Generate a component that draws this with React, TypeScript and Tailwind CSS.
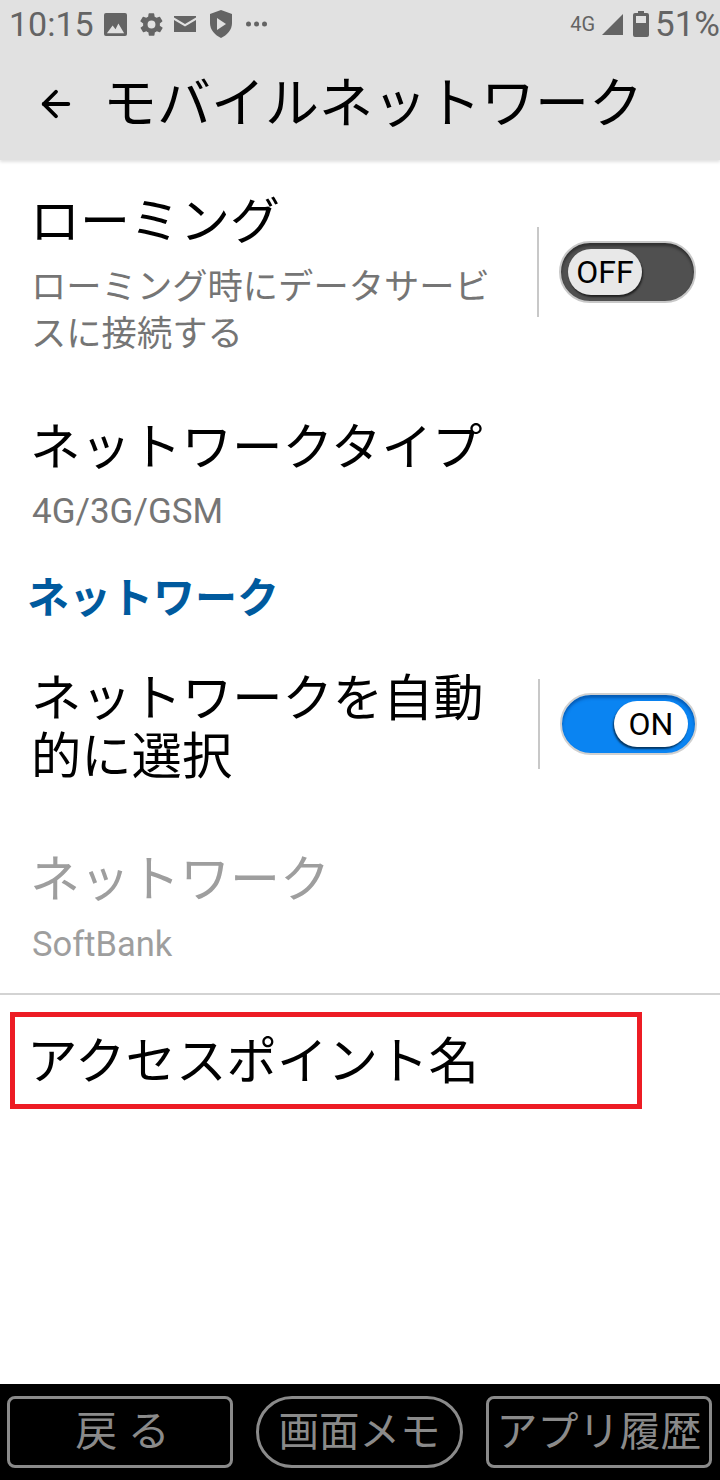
import React from 'react';
import { ArrowLeft } from 'lucide-react';

const jp = "font-['Roboto','Noto_Sans_CJK_JP',sans-serif]";

function Toggle({ on }: { on: boolean }) {
  if (on) {
    return (
      <div className="flex h-[62px] w-[137px] items-center justify-end rounded-full border-2 border-[#d0d0d0] bg-[#0a84f2] pr-[7px] shadow-[inset_0_3px_3px_rgba(0,50,120,0.5)]">
        <div className="flex h-[46px] w-[74px] items-center justify-center rounded-full bg-white text-[32px] leading-none text-black shadow-[-1px_2px_2px_rgba(0,0,0,0.6)]">
          ON
        </div>
      </div>
    );
  }
  return (
    <div className="flex h-[62px] w-[137px] items-center justify-start rounded-full border-2 border-[#c8c8c8] bg-[#505050] pl-[7px] shadow-[inset_0_3px_3px_rgba(0,0,0,0.4)]">
      <div className="flex h-[46px] w-[74px] items-center justify-center rounded-full bg-[#e8e8e8] text-[32px] leading-none text-black shadow-[1px_2px_2px_rgba(0,0,0,0.6)]">
        OFF
      </div>
    </div>
  );
}

function StatusBar() {
  return (
    <div className="flex h-[48px] items-center justify-between pl-[9px] text-[#646464]">
      <div className="flex items-center">
        <span className="text-[34px] leading-none">10:15</span>
        {/* notification icons */}
        <svg className="ml-[10px]" width="23" height="23" viewBox="0 0 24 24" fill="#646464">
          <path d="M2 0h20a2 2 0 0 1 2 2v20a2 2 0 0 1-2 2H2a2 2 0 0 1-2-2V2a2 2 0 0 1 2-2z" />
          <path d="M3 21l6-8 3 4 3-6 6 10z" fill="#e1e1e1" />
        </svg>
        <svg className="ml-[11px]" width="27" height="27" viewBox="0 0 24 24" fill="#646464">
          <path d="M19.4 13a7.5 7.5 0 0 0 0-2l2.1-1.6a.5.5 0 0 0 .1-.7l-2-3.4a.5.5 0 0 0-.6-.2l-2.5 1a7.3 7.3 0 0 0-1.7-1l-.4-2.7a.5.5 0 0 0-.5-.4h-4a.5.5 0 0 0-.5.4l-.4 2.7a7.3 7.3 0 0 0-1.7 1l-2.5-1a.5.5 0 0 0-.6.2l-2 3.4a.5.5 0 0 0 .1.7L4.6 11a7.5 7.5 0 0 0 0 2l-2.1 1.6a.5.5 0 0 0-.1.7l2 3.4a.5.5 0 0 0 .6.2l2.5-1a7.3 7.3 0 0 0 1.7 1l.4 2.7a.5.5 0 0 0 .5.4h4a.5.5 0 0 0 .5-.4l.4-2.7a7.3 7.3 0 0 0 1.7-1l2.5 1a.5.5 0 0 0 .6-.2l2-3.4a.5.5 0 0 0-.1-.7zM12 15.5a3.5 3.5 0 1 1 0-7 3.5 3.5 0 0 1 0 7z" />
        </svg>
        <svg className="ml-[9px]" width="22" height="16" viewBox="0 0 22 16" fill="#646464">
          <path d="M0 0h22v1.5L11 8 0 1.5z" />
          <path d="M0 4l11 6.5L22 4v12H0z" />
        </svg>
        <svg className="ml-[13px]" width="24" height="28" viewBox="0 0 24 28" fill="#646464">
          <path d="M12 0l11 4v9c0 7-5 12-11 15C6 25 1 20 1 13V4z" />
          <path d="M8 8l9 6-9 6z" fill="#e1e1e1" />
        </svg>
        <svg className="ml-[13px]" width="21" height="6" viewBox="0 0 21 6" fill="#646464">
          <circle cx="2.5" cy="3" r="2.5" />
          <circle cx="10.5" cy="3" r="2.5" />
          <circle cx="18.5" cy="3" r="2.5" />
        </svg>
      </div>
      <div className="flex items-center">
        <span className="text-[20px] leading-none">4G</span>
        <svg className="ml-[7px]" width="21" height="21" viewBox="0 0 21 21" fill="#646464">
          <path d="M21 0v21H0z" />
        </svg>
        <svg className="ml-[10px]" width="16" height="26" viewBox="0 0 16 26" fill="#646464">
          <path d="M5 0h6v2h3a2 2 0 0 1 2 2v20a2 2 0 0 1-2 2H2a2 2 0 0 1-2-2V4a2 2 0 0 1 2-2h3z" />
          <path d="M3 5h10v7H3z" fill="#e1e1e1" />
        </svg>
        <span className="ml-[6px] text-[35px] leading-none">51%</span>
      </div>
    </div>
  );
}

function NavButton({ label, className }: { label: string; className: string }) {
  return (
    <div className={`flex h-[72px] items-center justify-center whitespace-nowrap border-[3px] border-[#8a8a8a] text-[#8a8a8a] ${className}`}>
      {label}
    </div>
  );
}

export default function App() {
  return (
    <div className={`flex h-[1480px] w-[720px] flex-col overflow-hidden bg-white text-black ${jp}`}>
      <header className="h-[160px] bg-[#e1e1e1] shadow-[0_2px_3px_rgba(0,0,0,0.12)]">
        <StatusBar />
        <div className="flex h-[112px] items-center pl-[35px]">
          <ArrowLeft size={42} strokeWidth={2.2} />
          <span className="ml-[26px] mt-[1px] text-[54px] leading-none">モバイルネットワーク</span>
        </div>
      </header>

      <main className="flex-1">
        <div className="flex h-[260px] items-start pl-[30px] pr-[24px] pt-[34px]">
          <div className="w-[473px]">
            <div className="text-[50px] leading-[56px]">ローミング</div>
            <div className="ml-[1px] mt-[14px] text-[35.3px] leading-[47px] text-[#757575]">ローミング時にデータサービスに接続する</div>
          </div>
          <div className="ml-[35px] mt-[33px] h-[90px] w-[2px] bg-[#c8c8c8]" />
          <div className="ml-[20px] mt-[47px]">
            <Toggle on={false} />
          </div>
        </div>

        <div className="pl-[32px]">
          <div className="-ml-[2px] text-[50.5px] leading-[56px]">ネットワークタイプ</div>
          <div className="mt-[13px] text-[35px] leading-[46px] text-[#757575]">4G/3G/GSM</div>
        </div>

        <div className="mt-[36px] pl-[27px] text-[42px] font-bold leading-[56px] text-[#005a9e]">ネットワーク</div>

        <div className="mt-[43px] flex items-start pl-[31px]">
          <div className="w-[472px] text-[50.3px] leading-[58px]">ネットワークを自動的に選択</div>
          <div className="ml-[35px] mt-[9px] h-[90px] w-[2px] bg-[#c8c8c8]" />
          <div className="ml-[20px] mt-[23px]">
            <Toggle on={true} />
          </div>
        </div>

        <div className="mt-[66px] text-[#9e9e9e]">
          <div className="pl-[30px] text-[50px] leading-[56px]">ネットワーク</div>
          <div className="mt-[13px] pl-[32px] text-[34.5px] leading-[46px]">SoftBank</div>
        </div>

        <div className="mt-[26px] h-[2px] bg-[#d3d3d3]" />

        <div className="ml-[10px] mt-[17px] flex h-[97px] w-[632px] items-center border-[5px] border-[#ed1c24] pl-[12px] pt-[3px] text-[50.5px] leading-none">
          アクセスポイント名
        </div>
      </main>

      <nav className="flex h-[96px] items-center gap-[23px] bg-black pl-[7px] leading-none">
        <NavButton label="戻 る" className="w-[226px] rounded-[8px] pl-[5px] text-[42px]" />
        <NavButton label="画面メモ" className="w-[207px] rounded-full text-[40.5px]" />
        <NavButton label="アプリ履歴" className="w-[226px] rounded-[8px] text-[41px]" />
      </nav>
    </div>
  );
}
